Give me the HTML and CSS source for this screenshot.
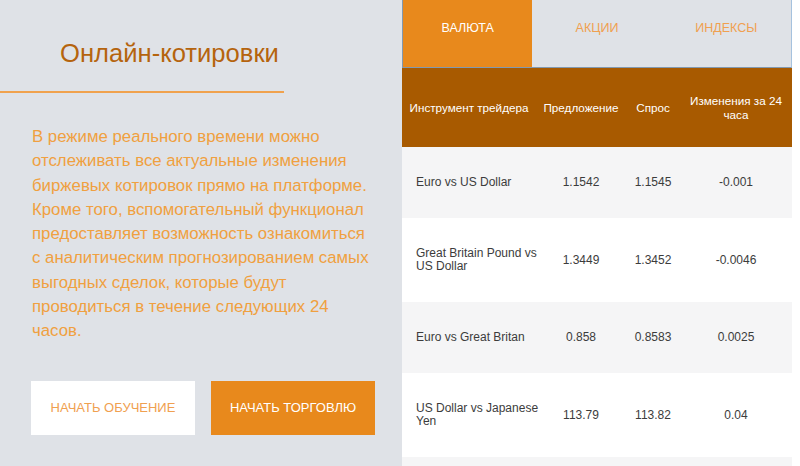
FILE: index.html
```html
<!DOCTYPE html>
<html lang="ru">
<head>
<meta charset="utf-8">
<title>Онлайн-котировки</title>
<link rel="stylesheet" href="styles.css">
</head>
<body>
<main class="quotes">
  <section class="intro">
    <h1 class="intro-title">Онлайн-котировки</h1>
    <hr class="intro-rule">
    <p class="intro-text">В режиме реального времени можно отслеживать все актуальные изменения биржевых котировок прямо на платформе. Кроме того, вспомогательный функционал предоставляет возможность ознакомиться с аналитическим прогнозированием самых выгодных сделок, которые будут проводиться в течение следующих 24 часов.</p>
    <div class="intro-actions">
      <a class="btn btn-light" href="#">Начать обучение</a>
      <a class="btn btn-solid" href="#">Начать торговлю</a>
    </div>
  </section>

  <section class="board">
    <nav class="tabs">
      <a class="tab tab-active" href="#">Валюта</a>
      <a class="tab" href="#">Акции</a>
      <a class="tab" href="#">Индексы</a>
    </nav>
    <div class="rates-wrap">
      <table class="rates">
        <colgroup>
          <col class="col-name">
          <col class="col-ask">
          <col class="col-bid">
          <col class="col-change">
        </colgroup>
        <thead>
          <tr>
            <th>Инструмент трейдера</th>
            <th>Предложение</th>
            <th>Спрос</th>
            <th>Изменения за 24 часа</th>
          </tr>
        </thead>
        <tbody>
          <tr>
            <td>Euro vs US Dollar</td>
            <td>1.1542</td>
            <td>1.1545</td>
            <td>-0.001</td>
          </tr>
          <tr>
            <td>Great Britain Pound vs<br>US Dollar</td>
            <td>1.3449</td>
            <td>1.3452</td>
            <td>-0.0046</td>
          </tr>
          <tr>
            <td>Euro vs Great Britan</td>
            <td>0.858</td>
            <td>0.8583</td>
            <td>0.0025</td>
          </tr>
          <tr>
            <td>US Dollar vs Japanese<br>Yen</td>
            <td>113.79</td>
            <td>113.82</td>
            <td>0.04</td>
          </tr>
        </tbody>
      </table>
    </div>
  </section>
</main>
</body>
</html>
```

FILE: styles.css
```css
* {
  box-sizing: border-box;
}

html,
body {
  margin: 0;
  height: 100%;
}

body {
  background: #dfe2e7;
  font-family: "Liberation Sans", Arial, sans-serif;
  overflow: hidden;
}

.quotes {
  display: grid;
  grid-template-columns: 402px 1fr;
  height: 100%;
}

/* left column: heading, description, actions */
.intro {
  padding-top: 38px;
}

.intro-title {
  margin: 0 0 0 60px;
  font-size: 25.6px;
  line-height: 30px;
  font-weight: 400;
  color: #b5640e;
}

.intro-rule {
  width: 284px;
  height: 2px;
  margin: 23px 0 0;
  border: 0;
  background: #f0a24e;
}

.intro-text {
  width: 341px;
  margin: 32px 0 0 32px;
  font-size: 16.8px;
  line-height: 24.3px;
  color: #f0a040;
}

.intro-actions {
  display: flex;
  gap: 16px;
  margin: 37px 0 0 31px;
}

.btn {
  display: flex;
  align-items: center;
  justify-content: center;
  width: 164px;
  height: 54px;
  font-size: 13px;
  text-transform: uppercase;
  text-decoration: none;
}

.btn-light {
  background: #ffffff;
  color: #f0a050;
}

.btn-solid {
  background: #e8891c;
  color: #ffffff;
}

/* right column: tabs and rates table */
.board {
  display: flex;
  flex-direction: column;
  background: #ffffff;
}

.tabs {
  display: flex;
  flex: none;
  width: 390px;
  height: 68px;
  background: #dfe2e7;
  border-left: 1px solid #8299b0;
  border-right: 1px solid #a6c2de;
  border-bottom: 1px solid #8299b0;
}

.tab {
  flex: 1;
  padding-top: 21px;
  font-size: 12.5px;
  line-height: 14px;
  text-align: center;
  text-transform: uppercase;
  text-decoration: none;
  color: #f0a050;
}

.tab-active {
  background: #e8891c;
  color: #ffffff;
}

.rates-wrap {
  flex: 1;
  width: 390px;
  background: #f5f5f6;
}

.rates {
  width: 390px;
  border-collapse: collapse;
  table-layout: fixed;
  font-size: 12px;
}

.col-name {
  width: 134px;
}

.col-ask {
  width: 90px;
}

.col-bid {
  width: 54px;
}

.col-change {
  width: 112px;
}

.rates th {
  height: 79px;
  padding: 0 5px;
  background: #a85a00;
  color: #ffffff;
  font-size: 11.7px;
  font-weight: 400;
  line-height: 14px;
  text-align: center;
}

.rates td {
  padding: 29px 2px 29px;
  line-height: 13px;
  color: #3c3c3c;
  text-align: center;
  white-space: nowrap;
}

.rates td:first-child {
  padding-left: 14px;
  text-align: left;
}

.rates tbody tr:nth-child(odd) {
  background: #f5f5f6;
}

.rates tbody tr:nth-child(even) {
  background: #ffffff;
}
```
